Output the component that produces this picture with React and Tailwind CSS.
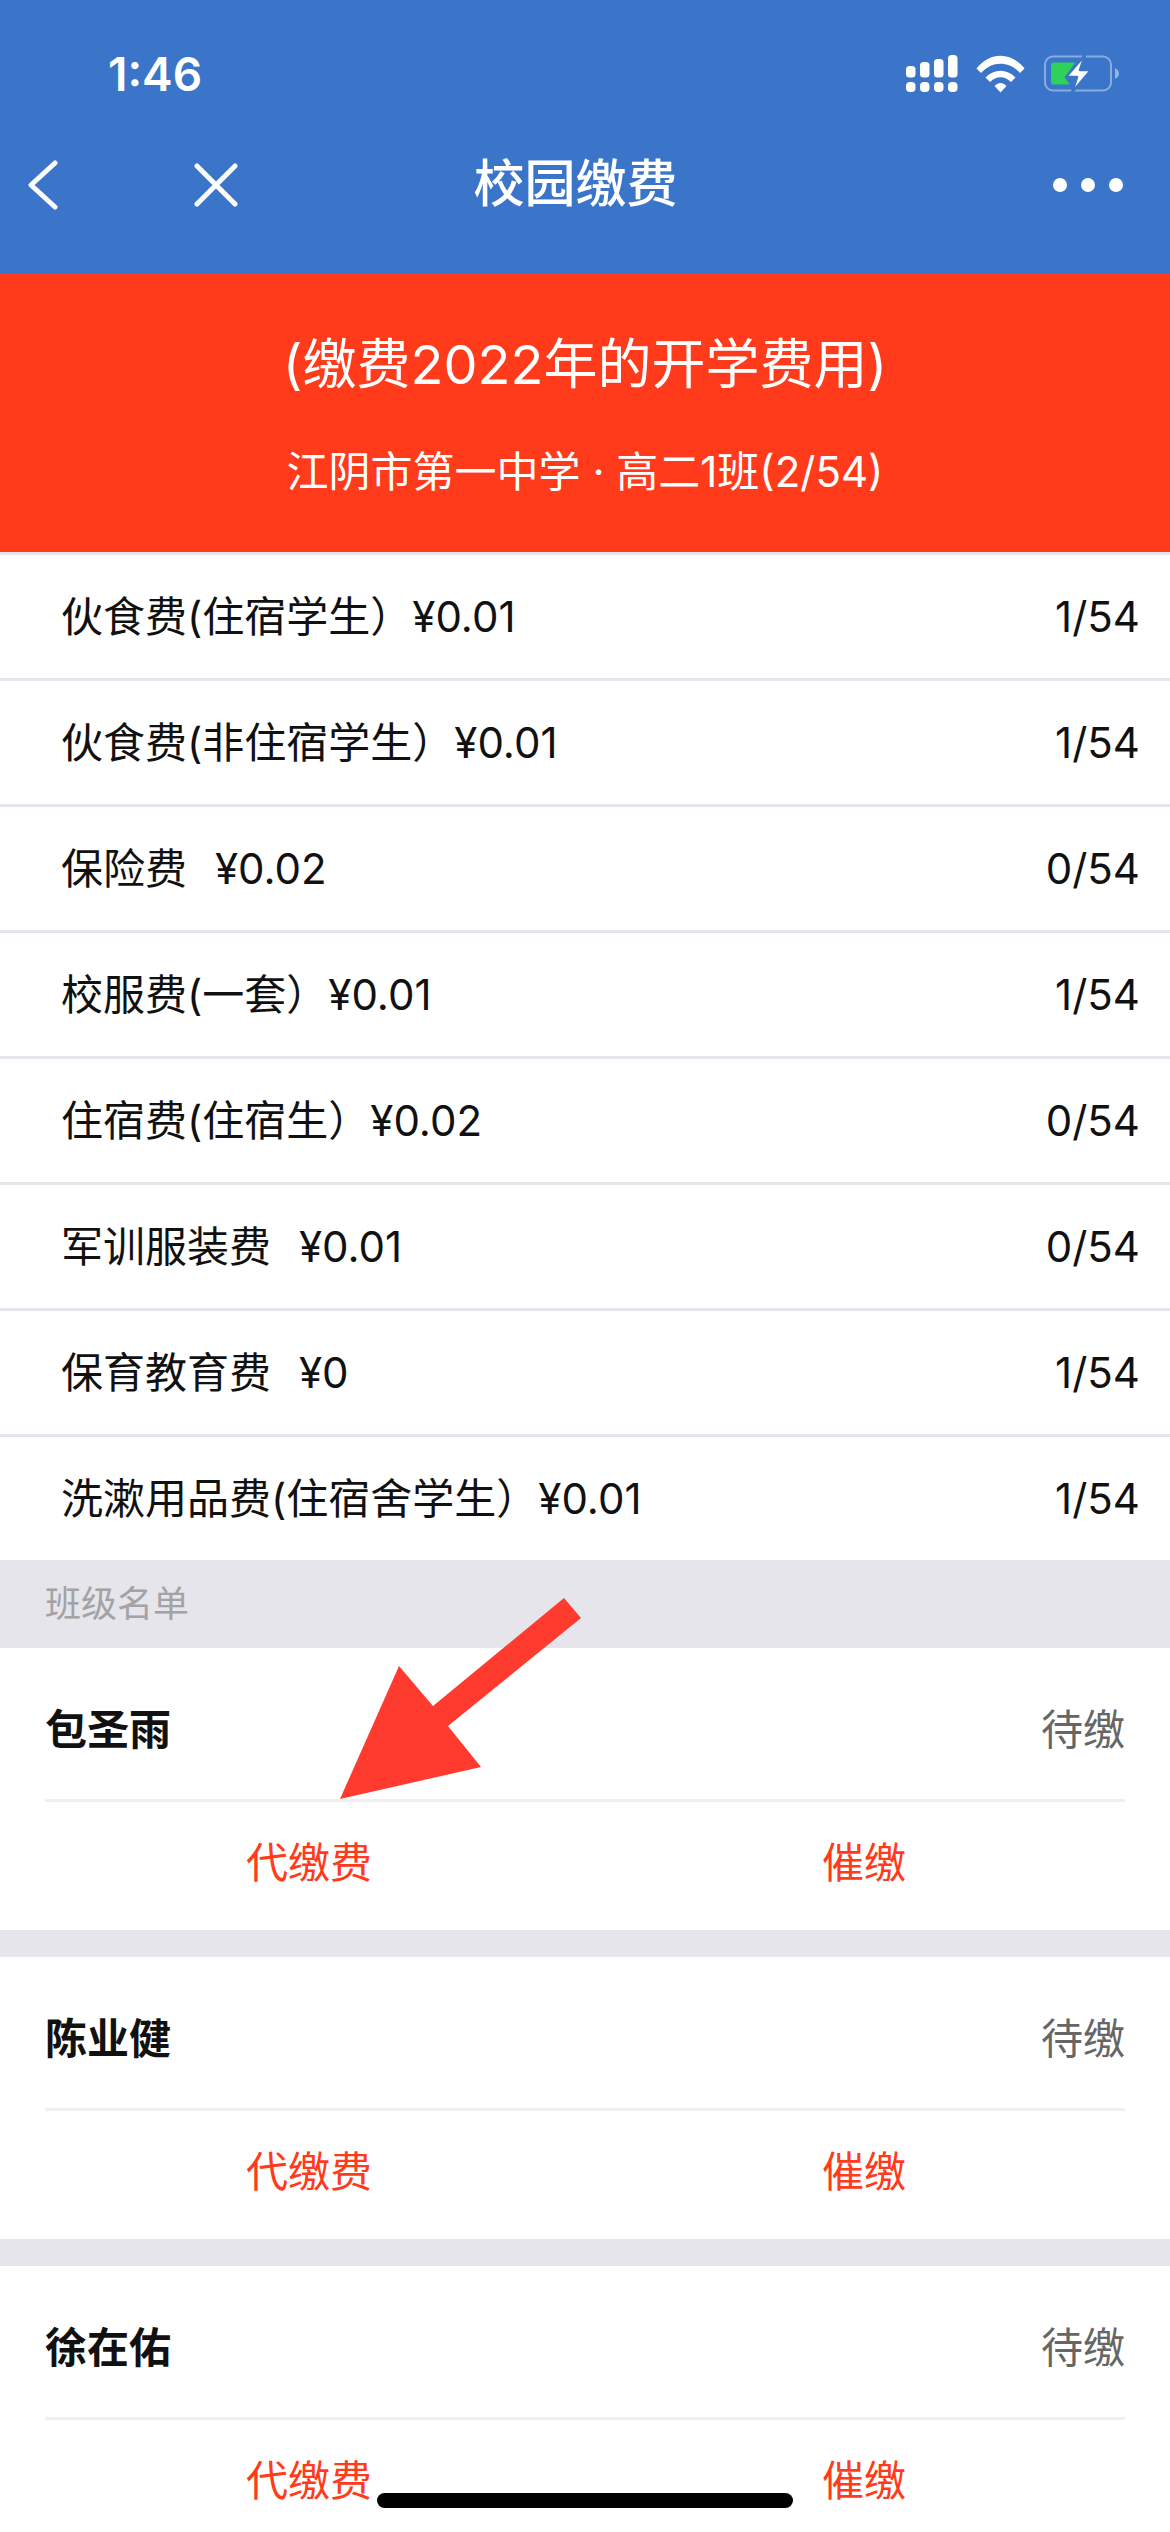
const FEES = [
  { name: "伙食费(住宿学生）", price: "¥0.01", count: "1/54" },
  { name: "伙食费(非住宿学生）", price: "¥0.01", count: "1/54" },
  { name: "保险费", price: "¥0.02", count: "0/54", spaced: true },
  { name: "校服费(一套）", price: "¥0.01", count: "1/54" },
  { name: "住宿费(住宿生）", price: "¥0.02", count: "0/54" },
  { name: "军训服装费", price: "¥0.01", count: "0/54", spaced: true },
  { name: "保育教育费", price: "¥0", count: "1/54", spaced: true },
  { name: "洗漱用品费(住宿舍学生）", price: "¥0.01", count: "1/54" },
];

const STUDENTS = ["包圣雨", "陈业健", "徐在佑"];

function Signal() {
  return (
    <svg width="52" height="38" viewBox="0 0 52 38" fill="#fff">
      <rect x="0" y="11" width="9.5" height="11.5" rx="3.5" />
      <rect x="14" y="7" width="9.5" height="15.5" rx="3.5" />
      <rect x="28" y="4" width="9.5" height="18.5" rx="3.5" />
      <rect x="42" y="0" width="9.5" height="22.5" rx="3.5" />
      <rect x="0" y="27" width="9.5" height="10" rx="4" />
      <rect x="14" y="27" width="9.5" height="10" rx="4" />
      <rect x="28" y="27" width="9.5" height="10" rx="4" />
      <rect x="42" y="27" width="9.5" height="10" rx="4" />
    </svg>
  );
}

function Wifi() {
  return (
    <svg width="50" height="38" viewBox="0 0 50 38" fill="#fff">
      <path d="M0.5 13.5 C14 -3.5 35 -3.5 48.5 13.5 L44 18 C33 5.5 16 5.5 5 18 Z" />
      <path d="M9.5 22.5 C18 13.5 31 13.5 39.5 22.5 L35 27 C29 20.5 20 20.5 14 27 Z" />
      <path d="M18.5 31 C22.5 27 26.5 27 30.5 31 L24.5 37.5 Z" />
    </svg>
  );
}

function Battery() {
  return (
    <svg width="76" height="38" viewBox="0 0 76 38" fill="none">
      <rect x="1" y="1.5" width="66" height="34" rx="8" stroke="#fff" strokeOpacity="0.4" strokeWidth="2" />
      <path d="M71 13 C73.5 14 75 16 75 18.5 C75 21 73.5 23 71 24 Z" fill="#fff" fillOpacity="0.45" />
      <path d="M7 10 Q7 7.5 9.5 7.5 H31 L21 23 L26 29.5 H9.5 Q7 29.5 7 27 Z" fill="#30d158" />
      <path d="M41 0 L22 22 H33 L28 37.5 L47 15 H36 Z" fill="#fff" stroke="#3b75c9" strokeWidth="2.5" strokeLinejoin="round" />
    </svg>
  );
}

function FeeRow({ fee }) {
  return (
    <div className="h-[126px] border-t-[3px] border-[#e5e5eb] bg-white pl-[61px] pr-[30px] flex items-center justify-between text-[42px] text-[#111111]">
      <div>
        <span>{fee.name}</span>
        <span className={fee.spaced ? "ml-[28px]" : ""}>{fee.price}</span>
      </div>
      <div>{fee.count}</div>
    </div>
  );
}

function StudentCard({ name }) {
  return (
    <div className="bg-white px-[45px] h-[282px]">
      <div className="h-[139px] pt-[12px] flex items-center justify-between border-b-[3px] border-[#efeff1] box-content">
        <span className="text-[42px] font-bold text-[#111111]">{name}</span>
        <span className="text-[42px] text-[#666666]">待缴</span>
      </div>
      <div className="h-[120px] flex items-center pl-[201px] gap-[450px] text-[42px] text-[#ff3b1b]">
        <span>代缴费</span>
        <span>催缴</span>
      </div>
    </div>
  );
}

export default function App() {
  return (
    <div className="relative w-[1170px] h-[2532px] overflow-hidden bg-white font-['Inter','Noto_Sans_CJK_SC',sans-serif]">
      {/* status bar + nav */}
      <div className="h-[273px] bg-[#3b75c9] text-white">
        <div className="h-[150px] pt-[50px] pl-[108px] pr-[50px] flex items-start justify-between">
          <span className="text-[46px] leading-[48px] font-semibold">1:46</span>
          <div className="flex items-start gap-[18px] pt-[5px]">
            <Signal />
            <Wifi />
            <Battery />
          </div>
        </div>
        <div className="h-[123px] -mt-[27px] px-[28px] pr-[47px] flex items-center justify-between">
          <div className="flex items-center gap-[131px] w-[240px]">
            <svg width="30" height="50" viewBox="0 0 30 50" fill="none" stroke="#fff" strokeWidth="5" strokeLinecap="round" strokeLinejoin="round">
              <path d="M27 3 L3 25 L27 47" />
            </svg>
            <svg width="44" height="44" viewBox="0 0 44 44" fill="none" stroke="#fff" strokeWidth="5" strokeLinecap="round" className="-ml-[-5px]">
              <path d="M3 3 L41 41 M41 3 L3 41" />
            </svg>
          </div>
          <span className="text-[51px] font-medium">校园缴费</span>
          <div className="flex items-center gap-[14px] w-[240px] justify-end">
            <span className="w-[14px] h-[14px] rounded-full bg-white" />
            <span className="w-[14px] h-[14px] rounded-full bg-white" />
            <span className="w-[14px] h-[14px] rounded-full bg-white" />
          </div>
        </div>
      </div>

      {/* banner */}
      <div className="h-[279px] bg-[#ff3b1b] text-white flex flex-col items-center">
        <div className="mt-[54px] text-[54px] leading-[76px]">(缴费2022年的开学费用)</div>
        <div className="mt-[40px] text-[42px] leading-[58px]">江阴市第一中学 · 高二1班(2/54)</div>
      </div>

      {FEES.map((fee) => (
        <FeeRow key={fee.name} fee={fee} />
      ))}

      <div className="h-[88px] bg-[#e5e5eb] pl-[45px] flex items-center text-[36px] text-[#a3a3a3] -mt-[0px]">
        班级名单
      </div>

      <div className="bg-[#e5e5eb] flex flex-col gap-[27px]">
        {STUDENTS.map((name) => (
          <StudentCard key={name} name={name} />
        ))}
      </div>

      {/* annotation arrow over the list */}
      <svg className="absolute left-[330px] top-[1590px]" width="260" height="220" viewBox="330 1590 260 220">
        <polygon points="564,1598 581,1618 448,1726 481,1767 340,1799 399,1666 433,1706" fill="#ff3b30" />
      </svg>

      {/* home indicator */}
      <div className="absolute left-[377px] top-[2493px] w-[416px] h-[15px] rounded-full bg-black" />
    </div>
  );
}
